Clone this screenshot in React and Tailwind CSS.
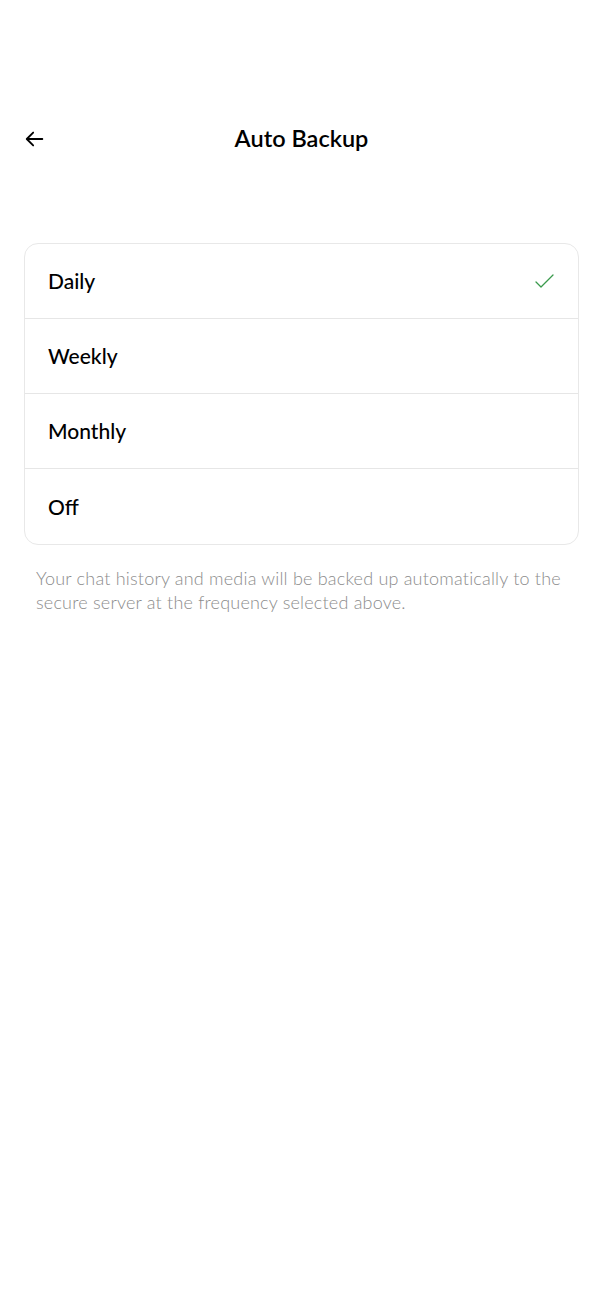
import React from 'react'

const options = ['Daily', 'Weekly', 'Monthly', 'Off']

function OptionRow({ label, selected, last }) {
  return (
    <div
      className={`flex h-[75px] items-center justify-between pl-[23px] pr-[24px] ${last ? '' : 'border-b border-[#e6e6e6]'}`}
    >
      <span className="text-[21px] font-medium text-black">{label}</span>
      {selected ? (
        <svg viewBox="0 0 20 20" className="h-[20px] w-[20px]" fill="none" stroke="#3a9a4c" strokeWidth="1.3" strokeLinecap="round" strokeLinejoin="round">
          <path d="M2 11l5 5 12-12" />
        </svg>
      ) : null}
    </div>
  )
}

export default function App() {
  const selected = 'Daily'

  return (
    <div className="min-h-[1311px] w-full bg-white font-['Lato','Noto_Sans',sans-serif] text-black">
      <div className="h-[110px]" />
      <div className="relative flex h-[57px] items-center justify-center">
        <button type="button" className="absolute left-[22px] top-1/2 -translate-y-1/2 p-0.5">
          <svg viewBox="0 0 24 24" className="h-[22px] w-[22px]" fill="none" stroke="black" strokeWidth="2" strokeLinecap="round" strokeLinejoin="round">
            <path d="M20 12H4M10 5l-7 7 7 7" />
          </svg>
        </button>
        <h1 className="text-[23.5px] font-semibold">Auto Backup</h1>
      </div>

      <div className="mx-6 mt-[76px] overflow-hidden rounded-[14px] border border-[#e8e8e8]">
        {options.map((o, i) => (
          <OptionRow key={o} label={o} selected={o === selected} last={i === options.length - 1} />
        ))}
      </div>

      <p className="mx-9 mt-[21px] text-[18px] font-light tracking-[0.2px] leading-[24px] text-[#8c8c8c]">
        Your chat history and media will be backed up automatically to the secure server at the frequency selected above.
      </p>
    </div>
  )
}
